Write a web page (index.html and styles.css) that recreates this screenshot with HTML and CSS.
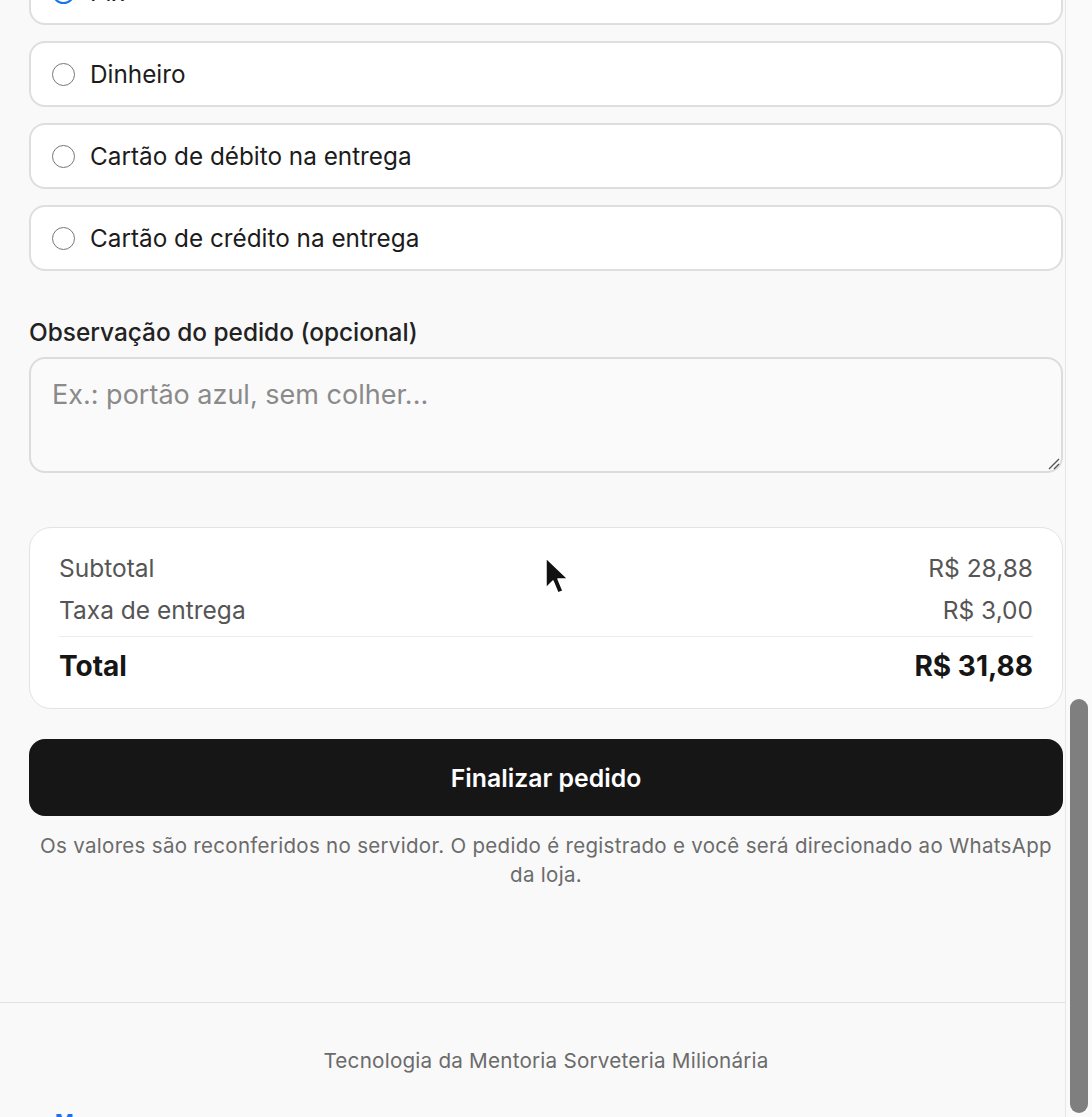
FILE: index.html
```html
<!DOCTYPE html>
<html lang="pt-BR">
<head>
<meta charset="utf-8">
<title>Checkout</title>
<link rel="stylesheet" href="styles.css">
</head>
<body>
<div class="page">
  <main class="checkout">
    <section class="payment">
      <label class="option selected"><span class="radio"></span><span class="option-text">Pix</span></label>
      <label class="option"><span class="radio"></span><span class="option-text">Dinheiro</span></label>
      <label class="option"><span class="radio"></span><span class="option-text">Cartão de débito na entrega</span></label>
      <label class="option"><span class="radio"></span><span class="option-text">Cartão de crédito na entrega</span></label>
    </section>

    <section class="notes">
      <div class="field-label">Observação do pedido (opcional)</div>
      <div class="textarea">
        <span class="placeholder">Ex.: portão azul, sem colher...</span>
        <svg class="grip" width="14" height="14" viewBox="0 0 14 14"><path d="M13 3 L3 13 M13 8 L8 13" stroke="#555" stroke-width="1.4" fill="none"/></svg>
      </div>
    </section>

    <section class="summary">
      <div class="row"><span>Subtotal</span><span>R$ 28,88</span></div>
      <div class="row"><span>Taxa de entrega</span><span>R$ 3,00</span></div>
      <div class="divider"></div>
      <div class="row total"><span>Total</span><span>R$ 31,88</span></div>
    </section>

    <button class="submit">Finalizar pedido</button>
    <p class="disclaimer">Os valores são reconferidos no servidor. O pedido é registrado e você será direcionado ao WhatsApp da loja.</p>
  </main>

  <footer class="footer">
    <div class="footer-text">Tecnologia da Mentoria Sorveteria Milionária</div>
    <div class="footer-link">M</div>
  </footer>

  <div class="scrollbar"><div class="thumb"></div></div>
  <svg class="cursor" width="28" height="42" viewBox="0 0 28 42"><path d="M1 1 L1 31 L8 24 L13 36 L18 34 L13 22 L23 22 Z" fill="#111" stroke="#fff" stroke-width="1.5" stroke-linejoin="round"/></svg>
</div>
</body>
</html>
```

FILE: styles.css
```css
html, body {
  margin: 0;
  padding: 0;
  height: 1117px;
  overflow: hidden;
  background: #f9f9f9;
}

.page {
  position: relative;
  height: 1117px;
  overflow: hidden;
  font-family: Inter, "Noto Sans", "Liberation Sans", sans-serif;
  color: #1c1c1c;
}

.checkout {
  padding: 0 29px;
  margin-top: -41px;
  display: flex;
  flex-direction: column;
}

.payment {
  display: flex;
  flex-direction: column;
  gap: 16px;
}

.option {
  height: 66px;
  box-sizing: border-box;
  border: 2px solid #dedede;
  border-radius: 16px;
  background: #fff;
  display: flex;
  align-items: center;
  padding: 0 21px;
  gap: 15px;
}

.radio {
  width: 23px;
  height: 23px;
  box-sizing: border-box;
  border: 1.5px solid #767676;
  border-radius: 50%;
  flex: none;
}

.option.selected .radio {
  border: 2px solid #1a73e8;
  background: radial-gradient(circle, #1a73e8 0 5px, #fff 6px);
}

.option-text {
  font-size: 24.3px;
  color: #1c1c1c;
}

.notes {
  margin-top: 47px;
  display: flex;
  flex-direction: column;
  gap: 11px;
}

.field-label {
  font-size: 24.4px;
  font-weight: 500;
  line-height: 28px;
  color: #222;
}

.textarea {
  position: relative;
  height: 116px;
  box-sizing: border-box;
  border: 2px solid #dcdcdc;
  border-radius: 16px;
  background: #fafafa;
  padding: 20px 21px;
}

.placeholder {
  font-size: 27px;
  line-height: 32px;
  color: #8a8a8a;
}

.grip {
  position: absolute;
  right: 1px;
  bottom: 1px;
}

.summary {
  margin-top: 54px;
  border: 1px solid #e3e3e3;
  border-radius: 22px;
  background: #fff;
  padding: 25px 29px 24px;
  display: flex;
  flex-direction: column;
  gap: 12px;
}

.row {
  display: flex;
  justify-content: space-between;
  font-size: 24.5px;
  line-height: 30px;
  color: #555;
}

.divider {
  height: 1px;
  background: #ececec;
  margin-top: -1px;
}

.row.total {
  font-size: 28px;
  font-weight: 700;
  line-height: 36px;
  color: #161616;
  margin-top: -1px;
}

.submit {
  margin-top: 30px;
  height: 77px;
  border: none;
  border-radius: 16px;
  background: #161616;
  color: #fff;
  font-family: inherit;
  font-size: 24.8px;
  font-weight: 600;
}

.disclaimer {
  margin: 15px 0 0;
  text-align: center;
  font-size: 20.5px;
  line-height: 29px;
  color: #6b6b6b;
  letter-spacing: 0.3px;
}

.footer {
  position: absolute;
  left: 0;
  right: 27px;
  top: 1002px;
  border-top: 1px solid #e2e2e2;
  padding-top: 43px;
}

.footer-text {
  text-align: center;
  font-size: 20.7px;
  line-height: 30px;
  color: #6b6b6b;
  letter-spacing: 0.2px;
  padding-left: 27px;
}

.footer-link {
  margin: 34px 0 0 55px;
  font-size: 20px;
  font-weight: 700;
  color: #1a73e8;
}

.scrollbar {
  position: absolute;
  top: 0;
  right: 0;
  width: 26px;
  height: 1117px;
  background: #fafafa;
  border-left: 1px solid #e6e6e6;
}

.thumb {
  position: absolute;
  left: 4px;
  top: 699px;
  width: 18px;
  height: 414px;
  border-radius: 9px;
  background: #7f7f7f;
}

.cursor {
  position: absolute;
  left: 545px;
  top: 557px;
}
```
